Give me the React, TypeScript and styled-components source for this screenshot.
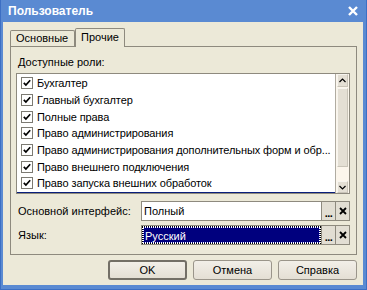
import React from 'react';
import styled, { createGlobalStyle } from 'styled-components';

const GlobalStyle = createGlobalStyle`
    html, body {
        margin: 0;
        padding: 0;
    }
    body {
        font-family: "Liberation Sans", Arial, sans-serif;
        font-size: 11px;
        color: #000;
    }
`;

const lineColor = '#8e8a7e';
const face = '#ece9d8';

const Window = styled('div')`
    width: 367px;
    height: 290px;
    box-sizing: border-box;
    display: flex;
    flex-direction: column;
    background: #5a8ad2;
    box-shadow: inset 1px 0 0 #3c6fc4, inset -1px 0 0 #3c6fc4, inset 0 -1px 0 #3c6fc4;
`;

const TitleBar = styled('div')`
    height: 22px;
    flex: none;
    display: flex;
    align-items: center;
    justify-content: space-between;
    padding: 0 9px 0 8px;
    color: #fff;
    font-weight: 700;
    font-size: 12px;
`;

const Body = styled('div')`
    flex: 1;
    margin: 0 4px 5px 3px;
    background: ${face};
    padding: 6px 6px 5px 7px;
    display: flex;
    flex-direction: column;
`;

const TabRow = styled('div')`
    display: flex;
    align-items: flex-end;
    height: 19px;
    margin-bottom: -1px;
    position: relative;
    z-index: 1;
`;

const Tab = styled('div')<{ $active?: boolean }>`
    box-sizing: border-box;
    height: ${props => props.$active ? '19px' : '16px'};
    margin-bottom: ${props => props.$active ? '0' : '1px'};
    width: ${props => props.$active ? '50px' : '65px'};
    border: 1px solid ${lineColor};
    border-bottom: none;
    border-radius: 2px 2px 0 0;
    background: ${face};
    padding-left: 5px;
    line-height: ${props => props.$active ? '17px' : '14px'};
`;

const Panel = styled('div')`
    height: 209px;
    box-sizing: border-box;
    border: 1px solid ${lineColor};
    padding: 0 6px 0 5px;
    display: flex;
    flex-direction: column;
`;

const Caption = styled('div')`
    padding: 9px 0 0 2px;
    line-height: 13px;
    height: 13px;
    margin-bottom: 4px;
`;

const ListBox = styled('div')`
    height: 121px;
    box-sizing: border-box;
    border: 1px solid ${lineColor};
    background: #fff;
    display: flex;
    margin-bottom: 7px;
`;

const Rows = styled('div')`
    flex: 1;
    min-width: 0;
    overflow: hidden;
    padding-top: 1px;
    box-shadow: inset 0 -1px 0 #0a1f7a;
`;

const Row = styled('div')`
    height: 16.67px;
    display: flex;
    align-items: center;
    padding-left: 4px;
    gap: 4px;
`;

const Check = styled('span')`
    flex: none;
    width: 12px;
    height: 12px;
    box-sizing: border-box;
    border: 1px solid #7c7a72;
    background: #fff;
    display: flex;
    align-items: center;
    justify-content: center;
`;

const RowText = styled('span')`
    white-space: nowrap;
    letter-spacing: -0.1px;
`;

const ScrollBar = styled('div')`
    width: 13px;
    flex: none;
    border-left: 1px solid #b0aca2;
    background: #fcf6ec;
    display: flex;
    flex-direction: column;
`;

const ScrollButton = styled('div')<{ $h: number }>`
    height: ${props => props.$h}px;
    flex: none;
    box-sizing: border-box;
    margin: 0 1px;
    background: #e4dfd4;
    border: 1px solid #c9c4b8;
    border-top-color: #f7f5ef;
    border-left-color: #f7f5ef;
    display: flex;
    align-items: center;
    justify-content: center;
`;

const Thumb = styled(ScrollButton)`
    margin-top: 1px;
`;

const Track = styled('div')`
    flex: 1;
`;

const FieldRow = styled('div')`
    display: flex;
    height: 20px;
    margin-bottom: 4px;
`;

const FieldLabel = styled('div')`
    width: 125px;
    flex: none;
    padding-left: 2px;
    box-sizing: border-box;
    line-height: 20px;
`;

const Input = styled('div')<{ $focused?: boolean }>`
    width: 181px;
    flex: none;
    box-sizing: border-box;
    border: 1px solid ${lineColor};
    background: #fff;
    padding: ${props => props.$focused ? '1px' : '0'};
`;

const InputValue = styled('div')<{ $focused?: boolean }>`
    height: 100%;
    box-sizing: border-box;
    padding-left: ${props => props.$focused ? '1px' : '2px'};
    line-height: ${props => props.$focused ? '16px' : '18px'};
    background: ${props => props.$focused ? '#00007e' : 'transparent'};
    color: ${props => props.$focused ? '#fff' : '#000'};
    border: ${props => props.$focused ? '1px dotted #fff' : 'none'};
    outline: ${props => props.$focused ? '1px dotted #000' : 'none'};
`;

const FieldButton = styled('div')`
    width: 15px;
    flex: none;
    margin-left: -1px;
    box-sizing: border-box;
    border: 1px solid ${lineColor};
    background: #e2ded3;
    display: flex;
    align-items: center;
    justify-content: center;
    font-size: 11px;
    font-weight: 700;
    line-height: 1;
`;

const Dots = styled('span')`
    padding-top: 5px;
    letter-spacing: -0.5px;
`;

const Footer = styled('div')`
    display: flex;
    justify-content: flex-end;
    gap: 6px;
    margin-top: 5px;
`;

const DialogButton = styled('div')<{ $default?: boolean }>`
    width: 79px;
    height: 20px;
    box-sizing: border-box;
    border: ${props => props.$default ? '2px solid #736f66' : '1px solid #9a958a'};
    border-radius: 3px;
    background: linear-gradient(#f2efe8, #e4dfd4);
    display: flex;
    align-items: center;
    justify-content: center;
`;

const CheckMark = () => (
    <svg width="8" height="8" viewBox="0 0 8 8">
        <polyline points="0.8,3.8 2.9,6 7.2,1.3" fill="none" stroke="#000" strokeWidth="1.7" />
    </svg>
);

const Cross = ({ size, width, color }: { size: number; width: number; color: string }) => (
    <svg width={size} height={size} viewBox={`0 0 ${size} ${size}`}>
        <path d={`M1 1 L${size - 1} ${size - 1} M${size - 1} 1 L1 ${size - 1}`} stroke={color} strokeWidth={width} />
    </svg>
);

const Arrow = ({ up }: { up?: boolean }) => (
    <svg width="7" height="5" viewBox="0 0 7 5">
        <polyline points={up ? '0.5,4 3.5,1 6.5,4' : '0.5,1 3.5,4 6.5,1'} fill="none" stroke="#000" strokeWidth="1.2" />
    </svg>
);

const roles = [
    'Бухгалтер',
    'Главный бухгалтер',
    'Полные права',
    'Право администрирования',
    'Право администрирования дополнительных форм и обр...',
    'Право внешнего подключения',
    'Право запуска внешних обработок',
];

export default function App() {
    return (
        <>
            <GlobalStyle />
            <Window>
                <TitleBar>
                    <span>Пользователь</span>
                    <Cross size={10} width={2.4} color="#fff" />
                </TitleBar>
                <Body>
                    <TabRow>
                        <Tab>Основные</Tab>
                        <Tab $active>Прочие</Tab>
                    </TabRow>
                    <Panel>
                        <Caption>Доступные роли:</Caption>
                        <ListBox>
                            <Rows>
                                {roles.map(r => (
                                    <Row key={r}>
                                        <Check><CheckMark /></Check>
                                        <RowText>{r}</RowText>
                                    </Row>
                                ))}
                            </Rows>
                            <ScrollBar>
                                <ScrollButton $h={13}><Arrow up /></ScrollButton>
                                <Thumb $h={79} />
                                <Track />
                                <ScrollButton $h={12}><Arrow /></ScrollButton>
                            </ScrollBar>
                        </ListBox>
                        <FieldRow>
                            <FieldLabel>Основной интерфейс:</FieldLabel>
                            <Input><InputValue>Полный</InputValue></Input>
                            <FieldButton><Dots>...</Dots></FieldButton>
                            <FieldButton><Cross size={8} width={1.8} color="#000" /></FieldButton>
                        </FieldRow>
                        <FieldRow>
                            <FieldLabel>Язык:</FieldLabel>
                            <Input $focused><InputValue $focused>Русский</InputValue></Input>
                            <FieldButton><Dots>...</Dots></FieldButton>
                            <FieldButton><Cross size={8} width={1.8} color="#000" /></FieldButton>
                        </FieldRow>
                    </Panel>
                    <Footer>
                        <DialogButton $default>OK</DialogButton>
                        <DialogButton>Отмена</DialogButton>
                        <DialogButton>Справка</DialogButton>
                    </Footer>
                </Body>
            </Window>
        </>
    );
}
